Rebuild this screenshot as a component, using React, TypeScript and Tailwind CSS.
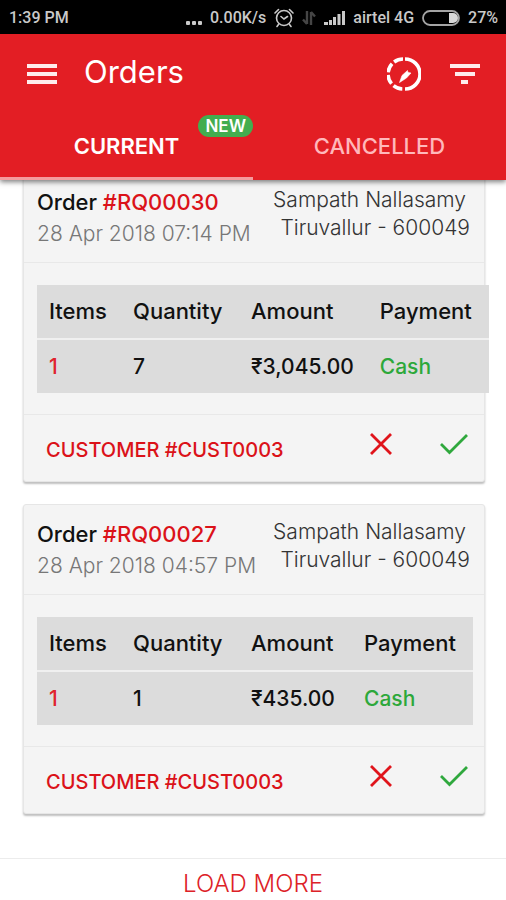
import { useState } from "react";

interface Order {
    id: string;
    placedAt: string;
    name: string;
    place: string;
    items: number;
    quantity: number;
    amount: string;
    payment: string;
    customer: string;
}

const ORDERS: Order[] = [
    {
        id: "RQ00030",
        placedAt: "28 Apr 2018 07:14 PM",
        name: "Sampath Nallasamy",
        place: "Tiruvallur - 600049",
        items: 1,
        quantity: 7,
        amount: "₹3,045.00",
        payment: "Cash",
        customer: "CUST0003",
    },
    {
        id: "RQ00027",
        placedAt: "28 Apr 2018 04:57 PM",
        name: "Sampath Nallasamy",
        place: "Tiruvallur - 600049",
        items: 1,
        quantity: 1,
        amount: "₹435.00",
        payment: "Cash",
        customer: "CUST0003",
    },
];

function StatusBar() {
    return (
        <div className="flex h-[34px] items-center justify-between bg-black pr-2 pl-[9px] font-[Roboto,sans-serif] text-base font-medium text-[#c9c9c9]">
            <span className="pt-0.5">1:39 PM</span>
            <div className="flex items-center gap-2 pt-0.5">
                <svg width="16" height="16" viewBox="0 0 16 16" fill="currentColor" aria-hidden="true">
                    <rect x="0" y="11" width="4" height="4" rx="1" />
                    <rect x="6" y="11" width="4" height="4" rx="1" />
                    <rect x="12" y="11" width="4" height="4" rx="1" />
                </svg>
                <span>0.00K/s</span>
                {/* alarm */}
                <svg width="20" height="20" viewBox="0 0 20 20" fill="none" stroke="currentColor" strokeWidth="1.6" strokeLinecap="round" aria-hidden="true">
                    <circle cx="10" cy="10" r="7.5" />
                    <path d="M7 8.5 10 11l3.5-2.5M1 5 4.500 1.500M19 5 15.500 1.500M4.500 16.500l-1.500 2M15.500 16.500l1.500 2" />
                </svg>
                {/* data arrows */}
                <svg width="14" height="16" viewBox="0 0 14 16" fill="none" stroke="#454545" strokeWidth="2.4" aria-hidden="true">
                    <path d="M5 1v13M5 14 1 9.500M9 15V2M9 2l4 4.500" />
                </svg>
                <svg width="21" height="16" viewBox="0 0 21 16" fill="currentColor" aria-hidden="true">
                    <rect x="0" y="12" width="4" height="3" />
                    <rect x="5" y="10" width="3" height="5" />
                    <rect x="9" y="7" width="3" height="8" />
                    <rect x="13.5" y="4" width="3" height="11" />
                    <rect x="18" y="1" width="3" height="14" />
                </svg>
                <span>airtel 4G</span>
                <svg width="38" height="16" viewBox="0 0 38 16" fill="none" aria-hidden="true">
                    <rect x="1" y="1" width="36" height="14" rx="7" stroke="#a5a5a5" strokeWidth="1.8" />
                    <path d="M27 3h4a5 5 0 0 1 0 10h-4z" fill="#d8d8d8" />
                </svg>
                <span>27%</span>
            </div>
        </div>
    );
}

function Toolbar() {
    return (
        <div className="flex h-[78px] items-center pr-[26px] pl-[27px]">
            <button type="button" aria-label="Menu" className="pt-0.5">
                <svg width="30" height="20" viewBox="0 0 30 20" fill="#ffecec">
                    <rect x="0" y="0" width="30" height="4" />
                    <rect x="0" y="8" width="30" height="4" />
                    <rect x="0" y="16" width="30" height="4" />
                </svg>
            </button>
            <h1 className="ml-[27px] flex-1 pb-0.5 text-[31px] leading-9">Orders</h1>
            <button type="button" aria-label="Delivery speed" className="mr-[29px] pt-0.5">
                <svg width="34" height="34" viewBox="0 0 34 34" fill="none" stroke="white" strokeWidth="3.6">
                    <path d="M18 2A15 15 0 0 1 18 32" />
                    <path d="M16 2A15 15 0 0 0 16 32" strokeDasharray="9.5 2.7" />
                    <path d="M12.500 25.500 15 18.500 20.500 13.500 21 15.500 24 16 19.500 21z" fill="white" strokeWidth="0.6" strokeLinejoin="round" />
                </svg>
            </button>
            <button type="button" aria-label="Filter" className="pt-0.5">
                <svg width="30" height="20" viewBox="0 0 30 20" fill="#ffecec">
                    <rect x="0" y="0" width="30" height="4" />
                    <rect x="5" y="8" width="20" height="4" />
                    <rect x="11" y="16" width="7" height="4" />
                </svg>
            </button>
        </div>
    );
}

function OrderCard({ order }: { order: Order }) {
    return (
        <article className="rounded-[3px] border border-[#e6e6e6] bg-[#f4f4f4] shadow-[0_2px_2px_rgba(0,0,0,0.25)]">
            <header className="flex h-[90px] justify-between border-b border-[#e8e8e8] pt-[13px] pr-3.5 pl-[13px] whitespace-nowrap">
                <div>
                    <h2 className="text-[22px] leading-8 font-medium">
                        Order <a href={`#${order.id}`} className="text-[#db1219]">#{order.id}</a>
                    </h2>
                    <p className="text-[21px] leading-8 font-light text-[#777]">{order.placedAt}</p>
                </div>
                <address className="text-right text-[21px] leading-7 font-light text-[#333] not-italic">
                    <span className="block pr-1">{order.name}</span>
                    <span className="block">{order.place}</span>
                </address>
            </header>
            <div className="px-[13px] pt-[22px] pb-[21px]">
                {/* wide amounts push the table past the card edge */}
                <table className="w-full bg-[#dcdcdc] text-left text-[21px]">
                    <thead>
                        <tr className="h-[54px] border-b-2 border-[#f0f0f0] text-[22px]">
                            <th className="min-w-[84px] px-3 font-medium">Items</th>
                            <th className="min-w-[118px] px-3 font-medium">Quantity</th>
                            <th className="min-w-[113px] px-3 font-medium">Amount</th>
                            <th className="min-w-[121px] px-3 font-medium">Payment</th>
                        </tr>
                    </thead>
                    <tbody>
                        <tr className="h-[54px] font-medium">
                            <td className="px-3 text-[#e0242c]">{order.items}</td>
                            <td className="px-3">{order.quantity}</td>
                            <td className="pr-3.5 pl-3">{order.amount}</td>
                            <td className="px-3 text-[#2da83a]">{order.payment}</td>
                        </tr>
                    </tbody>
                </table>
            </div>
            <footer className="flex h-[67px] items-center border-t border-[#e8e8e8] pr-4 pl-[22px]">
                <a href={`#${order.customer}`} className="mt-1 flex-1 text-xl font-medium text-[#db1219]">
                    CUSTOMER #{order.customer}
                </a>
                <button type="button" aria-label="Reject order" className="mr-[47px] mb-2">
                    <svg width="24" height="24" viewBox="0 0 24 24" fill="none" stroke="#e0141b" strokeWidth="2.8">
                        <path d="M2 2l20 20M22 2 2 22" />
                    </svg>
                </button>
                <button type="button" aria-label="Accept order" className="mb-2">
                    <svg width="28" height="24" viewBox="0 0 28 24" fill="none" stroke="#2fa83d" strokeWidth="2.8">
                        <path d="M1 12l8.500 8.500L27 3" />
                    </svg>
                </button>
            </footer>
        </article>
    );
}

export default function App() {
    const [tab, setTab] = useState<"current" | "cancelled">("current");

    return (
        <div className="flex min-h-screen flex-col overflow-x-hidden bg-white font-[Inter,sans-serif] text-[#111]">
            <div className="relative z-10 bg-[#e31e24] text-white shadow-[0_2px_5px_rgba(0,0,0,0.5)]">
                <StatusBar />
                <Toolbar />
                <nav className="grid h-[68px] grid-cols-2 text-[22px]" role="tablist">
                    <button
                        type="button"
                        role="tab"
                        aria-selected={tab === "current"}
                        onClick={() => setTab("current")}
                        className="relative border-b-3 border-transparent pt-1 font-semibold aria-selected:border-[#f59a9c]"
                    >
                        CURRENT
                        <span className="absolute top-[3px] right-0 rounded-full bg-[#43ad4f] px-[7px] text-[17px] leading-[22px]">
                            NEW
                        </span>
                    </button>
                    <button
                        type="button"
                        role="tab"
                        aria-selected={tab === "cancelled"}
                        onClick={() => setTab("cancelled")}
                        className="border-b-3 border-transparent pt-1 font-medium text-[#ffb8bb] aria-selected:border-[#f59a9c]"
                    >
                        CANCELLED
                    </button>
                </nav>
            </div>
            <main className="-mt-2 flex flex-1 flex-col gap-[22px] pr-[21px] pb-11 pl-[23px]">
                {ORDERS.map((order) => (
                    <OrderCard key={order.id} order={order} />
                ))}
            </main>
            <button type="button" className="h-[42px] border-t border-[#ececec] pt-2 text-2xl font-light text-[#dd2228]">
                LOAD MORE
            </button>
        </div>
    );
}
